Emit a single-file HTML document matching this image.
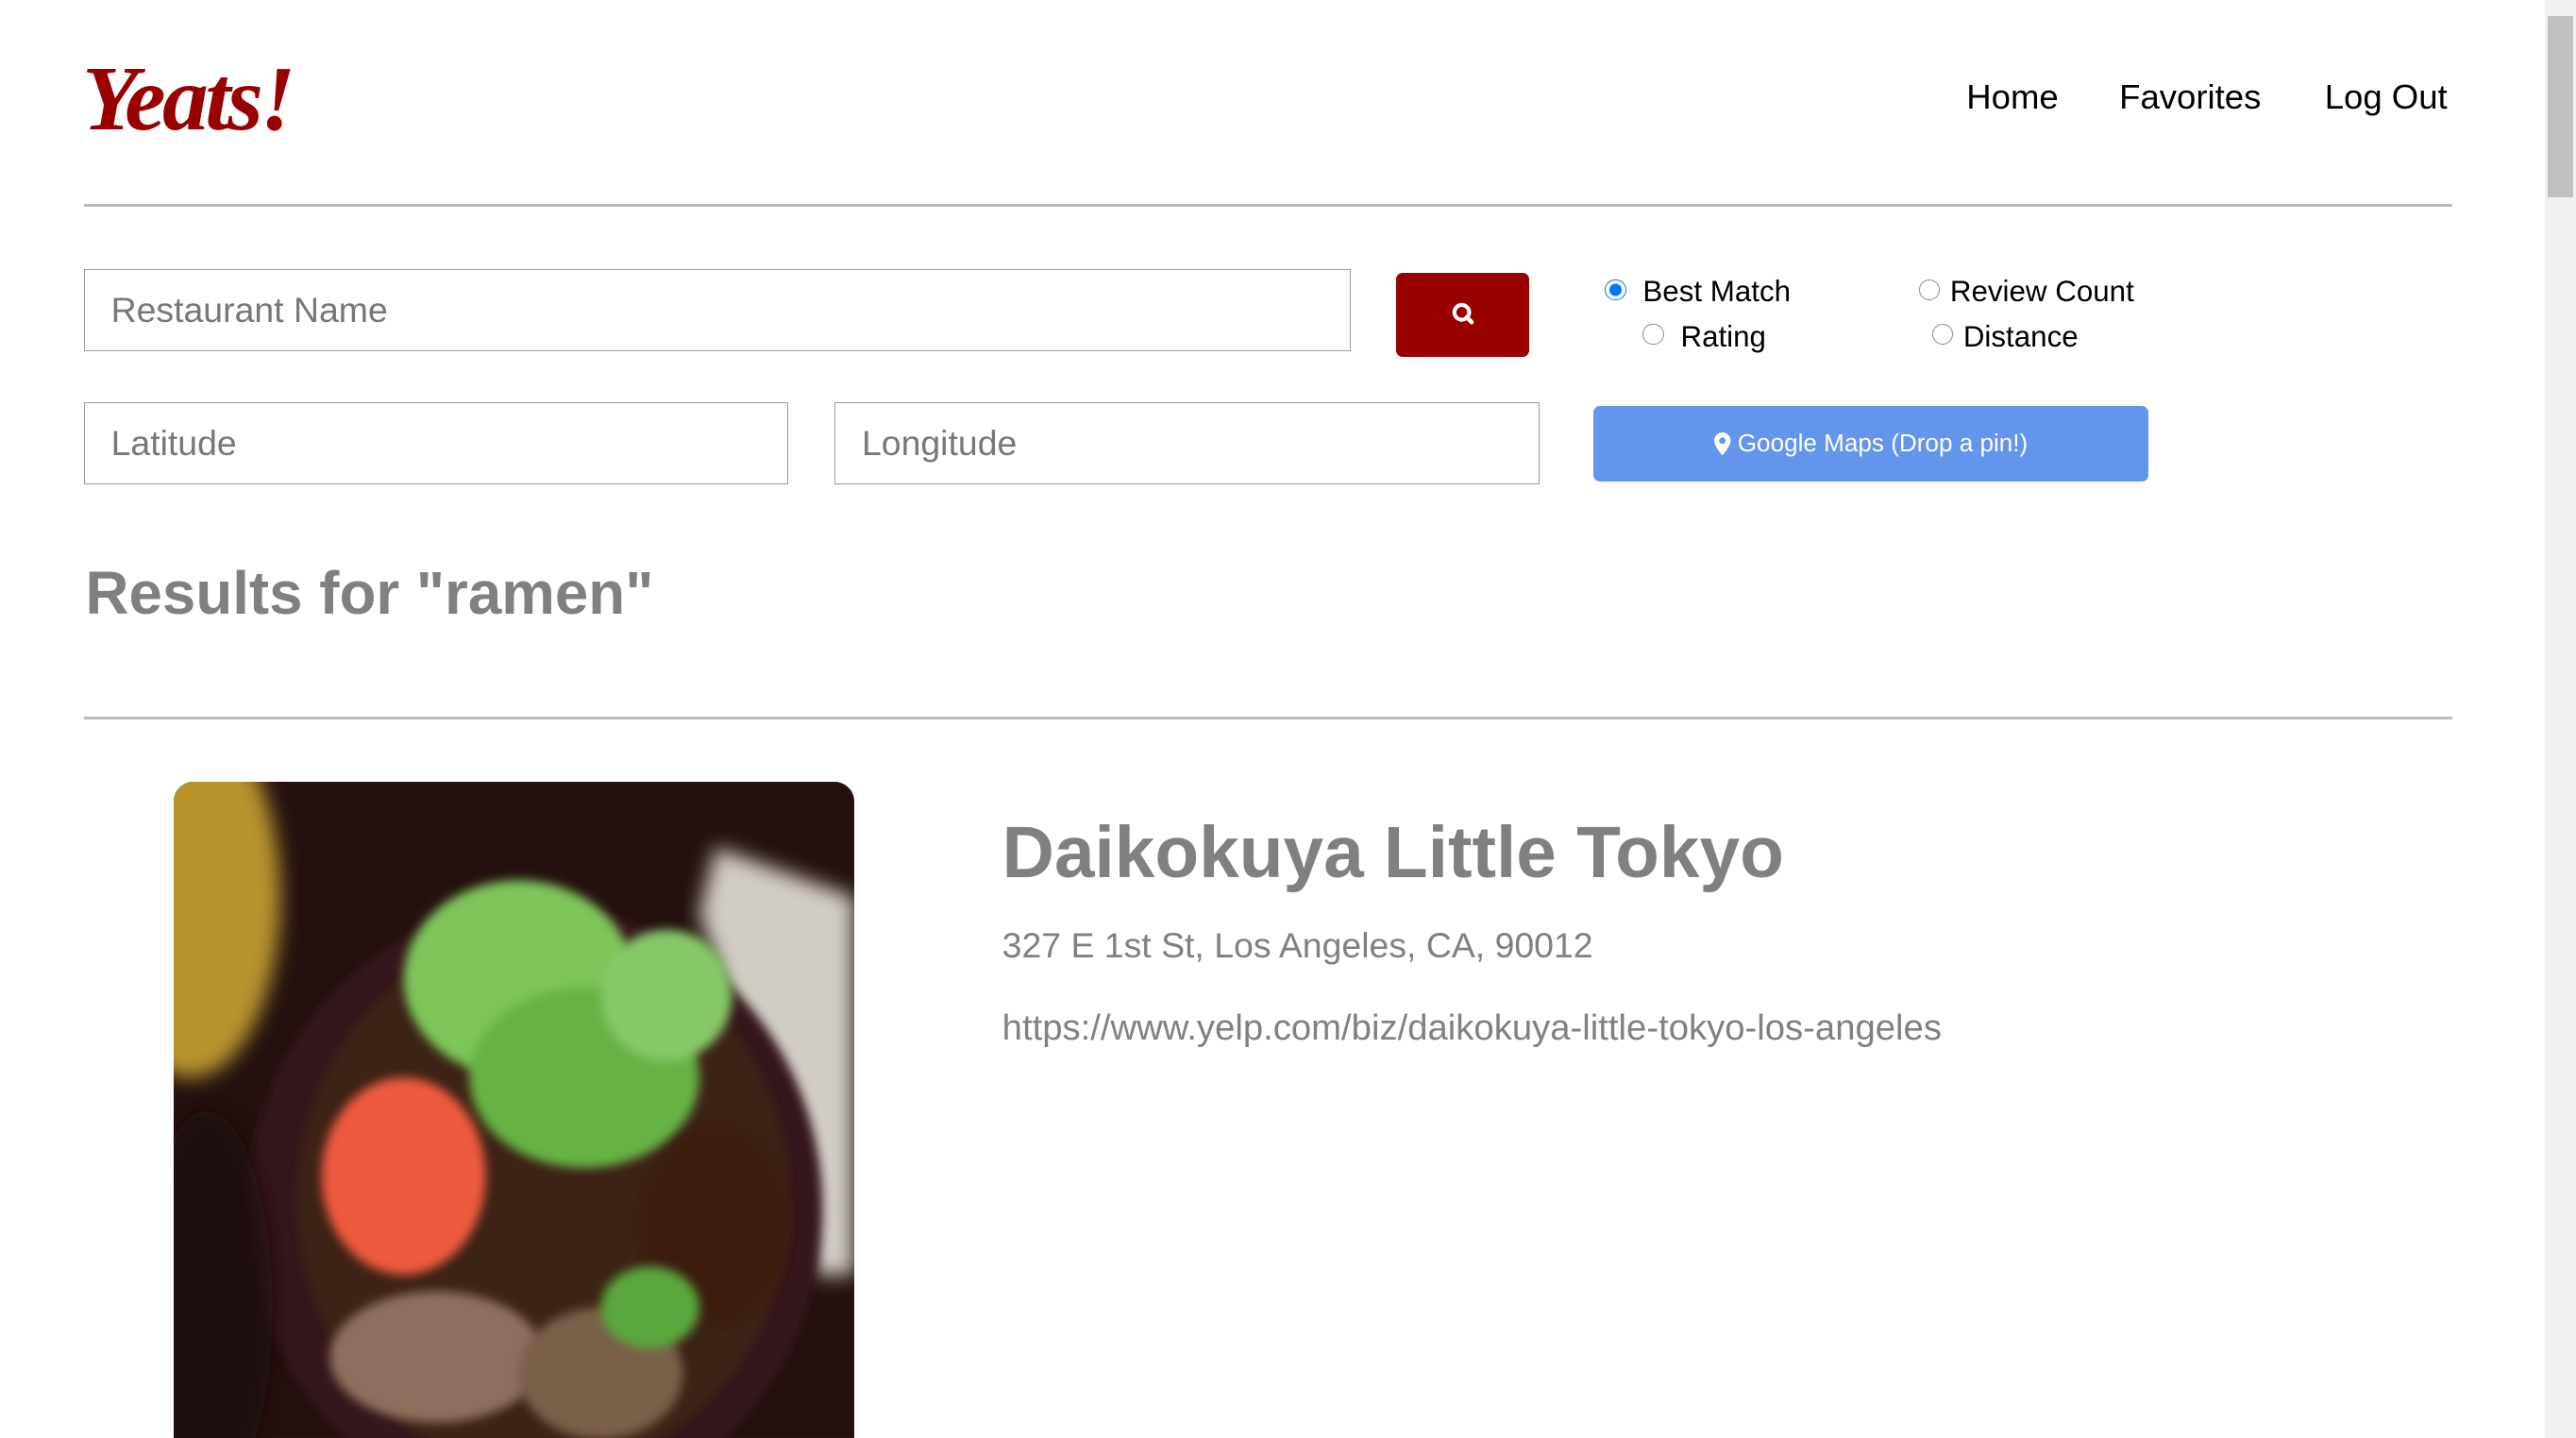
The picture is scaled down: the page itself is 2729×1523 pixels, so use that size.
<!DOCTYPE html>
<html><head><meta charset="utf-8"><style>
html,body{margin:0;padding:0;background:#fff;overflow:hidden;width:2729px;height:1523px}
body{position:relative}
#w{position:absolute;left:0;top:0;width:1568px;height:875px;zoom:1.74043;font-family:"Liberation Sans",Arial,sans-serif;overflow:hidden}
.a{position:absolute;white-space:nowrap}
.in{position:absolute;border:1px solid #999;box-sizing:border-box;background:#fff;color:#777;font-size:21.5px;padding-left:16px;display:flex;align-items:center}
.hr{position:absolute;left:51px;width:1442px;height:2px;background:#bbb}
.rad{position:absolute;width:13px;height:13px;border:1px solid #888;border-radius:50%;box-sizing:border-box;background:#fff}
.lab{position:absolute;font-size:18px;color:#000;white-space:nowrap}
.g{color:#808080}
</style></head><body><div id="w">
<div class="a" style="left:50px;top:28px;font-family:'Liberation Serif',serif;font-style:italic;font-weight:bold;font-size:56px;color:#990000;letter-spacing:-2px">Yeats!</div>
<div class="a" style="left:1197px;top:47px;font-size:21px">Home</div>
<div class="a" style="left:1290px;top:47px;font-size:21px">Favorites</div>
<div class="a" style="left:1415px;top:47px;font-size:21px">Log Out</div>
<div class="hr" style="top:124px"></div>
<div class="in" style="left:51px;top:164px;width:771px;height:50px">Restaurant Name</div>
<div class="a" style="left:850px;top:166px;width:81px;height:51px;background:#990000;border-radius:4px">
<svg width="81" height="51"><circle cx="40" cy="24" r="4.5" fill="none" stroke="#fff" stroke-width="2.4"/><line x1="43" y1="27" x2="46" y2="30" stroke="#fff" stroke-width="2.6" stroke-linecap="round"/></svg></div>
<div class="rad" style="left:977px;top:170px;border-color:#0075ff;background:radial-gradient(circle,#0075ff 0 3.5px,#fff 4px)"></div>
<div class="lab" style="left:1000px;top:167px">Best Match</div>
<div class="rad" style="left:1168px;top:170px"></div>
<div class="lab" style="left:1187px;top:167px">Review Count</div>
<div class="rad" style="left:1000px;top:197px"></div>
<div class="lab" style="left:1023px;top:195px">Rating</div>
<div class="rad" style="left:1176px;top:197px"></div>
<div class="lab" style="left:1195px;top:195px">Distance</div>
<div class="in" style="left:51px;top:245px;width:429px;height:50px">Latitude</div>
<div class="in" style="left:508px;top:245px;width:429px;height:50px">Longitude</div>
<div class="a" style="left:970px;top:247px;width:338px;height:46px;background:#6495ed;border-radius:4px;color:#fff;font-size:15px;display:flex;align-items:center;justify-content:center">
<svg width="10" height="14" viewBox="0 0 10 14" style="margin-right:4px"><path d="M5 0C2.2 0 0 2.2 0 5c0 3.5 5 9 5 9s5-5.5 5-9C10 2.2 7.8 0 5 0zm0 7a2 2 0 110-4 2 2 0 010 4z" fill="#fff"/></svg>Google Maps (Drop a pin!)</div>
<div class="a g" style="left:52px;top:340px;font-size:36.6px;font-weight:bold">Results for "ramen"</div>
<div class="hr" style="top:436px"></div>
<div class="a" style="left:106px;top:476px;width:414px;height:399px;border-radius:12px 12px 0 0;overflow:hidden;background:#2a1512">
<svg width="414" height="399" viewBox="0 0 414 399"><defs><filter id="b"><feGaussianBlur stdDeviation="6"/></filter><filter id="b2"><feGaussianBlur stdDeviation="3"/></filter></defs>
<rect width="414" height="399" fill="#24110f"/>
<ellipse cx="10" cy="70" rx="55" ry="110" fill="#b8932f" filter="url(#b)"/>
<polygon points="330,40 414,70 414,300 390,300 370,230 320,80" fill="#d2ccc6" filter="url(#b)"/>
<ellipse cx="220" cy="260" rx="175" ry="185" fill="#34181c" filter="url(#b2)"/>
<ellipse cx="225" cy="255" rx="150" ry="165" fill="#3d2216" filter="url(#b2)"/>
<ellipse cx="210" cy="120" rx="70" ry="60" fill="#7ec55a" filter="url(#b2)"/>
<ellipse cx="250" cy="180" rx="70" ry="55" fill="#66b244" filter="url(#b2)"/>
<ellipse cx="300" cy="130" rx="40" ry="40" fill="#86c868" filter="url(#b2)"/>
<ellipse cx="140" cy="240" rx="50" ry="60" fill="#ee5a3e" filter="url(#b2)"/>
<ellipse cx="160" cy="350" rx="65" ry="40" fill="#8c705c" filter="url(#b2)"/>
<ellipse cx="260" cy="360" rx="50" ry="40" fill="#7a5e4a" filter="url(#b2)"/>
<ellipse cx="330" cy="270" rx="45" ry="60" fill="#3a1c0e" filter="url(#b2)"/>
<ellipse cx="290" cy="320" rx="30" ry="25" fill="#5aa83a" filter="url(#b2)"/>
<ellipse cx="20" cy="320" rx="40" ry="120" fill="#1e0e0c" opacity="0.8" filter="url(#b)"/>
</svg></div>
<div class="a g" style="left:610px;top:494px;font-size:44px;font-weight:bold">Daikokuya Little Tokyo</div>
<div class="a g" style="left:610px;top:563px;font-size:21.5px">327 E 1st St, Los Angeles, CA, 90012</div>
<div class="a g" style="left:610px;top:613px;font-size:22px">https://www.yelp.com/biz/daikokuya-little-tokyo-los-angeles</div>
<div class="a" style="left:1549px;top:0;width:19px;height:875px;background:#f1f1f1"></div>
<div class="a" style="left:1551px;top:10px;width:15px;height:110px;background:#c1c1c1"></div>
</div></body></html>
